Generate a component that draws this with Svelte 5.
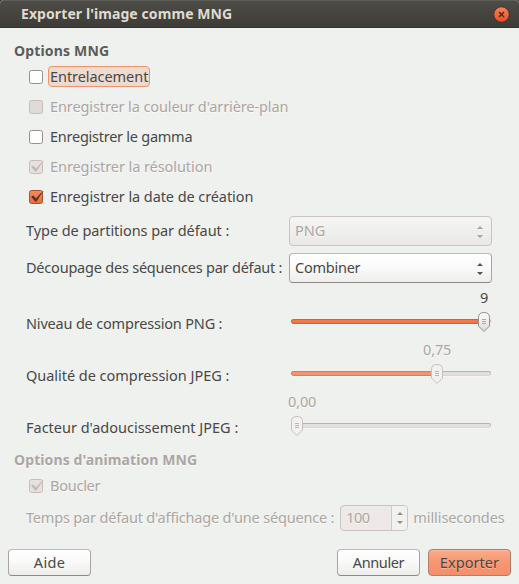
<script>
  const checks = [
    { text: 'Entrelacement', w: 98, focus: true },
    { text: "Enregistrer la couleur d'arrière-plan", w: 238, disabled: true },
    { text: 'Enregistrer le gamma', w: 142 },
    { text: 'Enregistrer la résolution', w: 162, disabled: true, checked: true },
    { text: 'Enregistrer la date de création', w: 203, checked: true }
  ];
  const combos = [
    { label: 'Type de partitions par défaut :', w: 203, value: 'PNG', vw: 30, disabled: true },
    { label: 'Découpage des séquences par défaut :', w: 256, value: 'Combiner', vw: 65 }
  ];
  const sliders = [
    { label: 'Niveau de compression PNG :', w: 196, value: '9', vw: 8, left: 191, x: 195 },
    { label: 'Qualité de compression JPEG :', w: 203, value: '0,75', vw: 28, left: 134, x: 148, disabled: true },
    { label: "Facteur d'adoucissement JPEG :", w: 212, value: '0,00', vw: 28, left: -1, x: 8, disabled: true }
  ];

  // Spreads the letters so that a label takes its nominal width.
  function fit(node, width) {
    const natural = node.getBoundingClientRect().width;
    node.style.letterSpacing = (width + 0.3 - natural) / node.textContent.length + 'px';
  }
</script>

{#snippet label(text, w)}<span class="label" use:fit={w}>{text}</span>{/snippet}

{#snippet box(checked, disabled)}
  <svg class="box" width="17" height="16" viewBox="0 0 17 16">
    <rect x="1.5" y="1.5" width="13" height="13" rx="2"
      fill={checked ? (disabled ? '#e6e1de' : 'url(#orange)') : disabled ? '#e0dbd8' : '#fff'}
      stroke={disabled ? '#c6bdb9' : checked ? '#a1533a' : '#9a8f8b'} />
    {#if checked}
      <path d="M3 7.8L5.4 6.6L8 9.6Q11.4 4.6 16.2 1.4Q11.6 6.6 8.6 12.6H7.2Z" fill={disabled ? '#c2bab6' : '#573226'} />
    {/if}
  </svg>
{/snippet}

{#snippet arrows(disabled)}
  <svg class="arrows" width="8" height="14" viewBox="0 0 8 14" fill={disabled ? '#a9a39f' : '#56544f'}>
    <path d="M1 5L4 2L7 5Z M1 11L4 14L7 11Z" />
  </svg>
{/snippet}

<svg class="defs" width="0" height="0">
  <defs>
    <linearGradient id="orange" x2="0" y2="1"><stop stop-color="#f58c62" /><stop offset="1" stop-color="#eb6b3b" /></linearGradient>
    <linearGradient id="close" x2="0" y2="1"><stop stop-color="#f58260" /><stop offset="1" stop-color="#e94e1d" /></linearGradient>
    <linearGradient id="knob" x2="0" y2="1"><stop stop-color="#fff" /><stop offset="1" stop-color="#dcdad8" /></linearGradient>
  </defs>
</svg>

<div class="window">
  <header>
    {@render label("Exporter l'image comme MNG", 211)}
    <svg width="17" height="17" viewBox="0 0 17 17">
      <circle cx="8.5" cy="8.5" r="7.8" fill="url(#close)" stroke="#36352f" />
      <path d="M6 6L11 11M11 6L6 11" stroke="#52281a" stroke-width="1.5" />
    </svg>
  </header>

  <main>
    <h2>{@render label('Options MNG', 95)}</h2>
    {#each checks as c}
      <div class="check" class:disabled={c.disabled}>
        {@render box(c.checked, c.disabled)}
        <span class="caption" class:focus={c.focus}>{@render label(c.text, c.w)}</span>
      </div>
    {/each}

    {#each combos as c}
      <div class="row">
        {@render label(c.label, c.w)}
        <div class="combo" class:disabled={c.disabled}>
          {@render label(c.value, c.vw)}
          {@render arrows(c.disabled)}
        </div>
      </div>
    {/each}

    {#each sliders as s}
      <div class="row scale">
        <div class="name">{@render label(s.label, s.w)}</div>
        <div class="slider" class:disabled={s.disabled}>
          <div class="value" style="margin-left: {s.left}px">{@render label(s.value, s.vw)}</div>
          <svg width="204" height="22" viewBox="0 0 204 22">
            <rect x="2" y="7.5" width="200" height="5" rx="2.5" fill="#fbfbfa" />
            <rect x="2" y="7" width="200" height="4.5" rx="2" fill="#b8b1ac" />
            <rect x="2.6" y="8" width="198.8" height="3" rx="1.5" fill="#e3dfdb" />
            {#if s.x > 10}
              <rect x="2.5" y="7.5" width={s.x - 2} height="4" rx="2"
                fill={s.disabled ? '#f5936c' : '#f0784a'} stroke={s.disabled ? '#e27b53' : '#d95f31'} />
            {/if}
            <path d="M{s.x - 5.5} 5.5Q{s.x - 5.5} .5 {s.x} .5T{s.x + 5.5} 5.5V14L{s.x} 19.5L{s.x - 5.5} 14Z"
              fill={s.disabled ? '#f3f1f0' : 'url(#knob)'} stroke={s.disabled ? '#c6c0bc' : '#96908c'} />
            <path d="M{s.x - 2} 7.5h4m-4 2h4m-4 2h4" stroke={s.disabled ? '#bab5b1' : '#aaa6a2'} />
          </svg>
        </div>
      </div>
    {/each}

    <section class="disabled">
      <h2>{@render label("Options d'animation MNG", 183)}</h2>
      <div class="check">
        {@render box(true, true)}
        <span class="caption">{@render label('Boucler', 50)}</span>
      </div>
      <div class="row delay">
        {@render label("Temps par défaut d'affichage d'une séquence :", 308)}
        <div class="spin">
          <div class="entry">{@render label('100', 23)}</div>
          <div class="steps">
            <svg width="8" height="14" viewBox="0 0 8 14" fill="#96908c"><path d="M1 4L4 1L7 4ZM1 10L4 13L7 10Z" /></svg>
          </div>
        </div>
        {@render label('millisecondes', 91)}
      </div>
    </section>
  </main>

  <footer>
    <button>{@render label('Aide', 31)}</button>
    <span class="gap"></span>
    <button>{@render label('Annuler', 51)}</button>
    <button class="primary">{@render label('Exporter', 59)}</button>
  </footer>
</div>

<style>
  :global(body) { margin: 0; background: #eff1ee; }
  .defs { position: absolute; }
  .window {
    box-sizing: border-box; width: 519px; height: 584px; overflow: hidden;
    display: flex; flex-direction: column; background: #eff1ee; color: #484848;
    font: 14.5px/20px "Noto Sans", "Open Sans", sans-serif;
  }
  .label { white-space: nowrap; flex: none; padding-bottom: 2px; }
  svg { display: block; flex: none; }
  header {
    box-sizing: border-box; height: 28px; flex: none; display: flex; align-items: center;
    justify-content: space-between; padding: 0 9px 0 21px;
    border-top: 1px solid #5d5c56; border-bottom: 1px solid #33322e;
    border-radius: 4px 4px 0 0; background: linear-gradient(#4d4c46, #3d3c38);
    box-shadow: 0 -4px 0 4px #33322e; color: #dfdbd2; font-size: 14px; font-weight: 700;
  }
  header .label { padding: 0; }
  main { height: 507px; flex: none; box-sizing: border-box; padding-top: 12px; }
  h2 { margin: 0; height: 22px; padding-left: 14px; font-size: 14px; line-height: 22px; font-weight: 700; color: #5c5c5b; }
  .disabled, .disabled h2 { color: #aca6a3; text-shadow: 0 1px #fafafa; }
  .check { height: 30px; display: flex; align-items: center; padding-left: 28px; }
  .caption { box-sizing: border-box; height: 21px; margin: 0 0 1px 3px; padding: 0 1px; border: 1px solid transparent; border-radius: 4px; display: flex; align-items: center; }
  .caption .label { padding-bottom: 1px; }
  .focus { border-color: #f29468; background: #efdacf; }
  .row { height: 37px; display: flex; align-items: center; justify-content: space-between; padding: 0 27px 0 26px; }
  .combo {
    box-sizing: border-box; width: 203px; height: 30px; display: flex; align-items: center;
    justify-content: space-between; padding: 0 7px 0 5px; border: 1px solid #aaa39f;
    border-top-color: #c0b9b5; border-bottom-color: #8f8884; border-radius: 4px;
    background: linear-gradient(#fff, #fafafa 45%, #eeeeed);
  }
  .combo.disabled { border-color: #cbc3bf; background: linear-gradient(#f4f5f4, #efefed 50%, #e9e8e7); }
  .scale { height: 52px; align-items: flex-start; }
  .name { padding-top: 27px; }
  .slider { width: 203px; padding-top: 1px; }
  .value { height: 25px; }
  .slider svg { overflow: visible; }
  section { padding-top: 7px; }
  .delay { height: 34px; justify-content: flex-start; padding-right: 0; }
  .spin { box-sizing: border-box; width: 68px; height: 26px; margin: 0 5px 0 6px; display: flex; border: 1px solid #cbc5c1; border-radius: 4px; background: #eee9e7; overflow: hidden; }
  .entry { flex: 1; padding-left: 5px; line-height: 22px; }
  .steps { width: 15px; border-left: 1px solid #d0cac7; background: #f1f1f0; display: flex; align-items: center; justify-content: center; }
  footer { display: flex; gap: 8px; padding: 14px 8px 0; }
  .gap { flex: 1; }
  button {
    box-sizing: border-box; width: 83px; height: 27px; padding: 0; display: flex; align-items: center; justify-content: center;
    border: 1px solid #aaa39f; border-top-color: #c0b9b5; border-bottom-color: #8f8884; border-radius: 4px;
    background: linear-gradient(#fff, #fafafa 45%, #ededec); color: inherit; font: inherit;
  }
  .primary { border-color: #b77b66; background: linear-gradient(#fbab8b, #f79672 50%, #f68f69); box-shadow: inset 0 1px #fcbba1; text-shadow: 0 1px #fbb498; }
</style>
